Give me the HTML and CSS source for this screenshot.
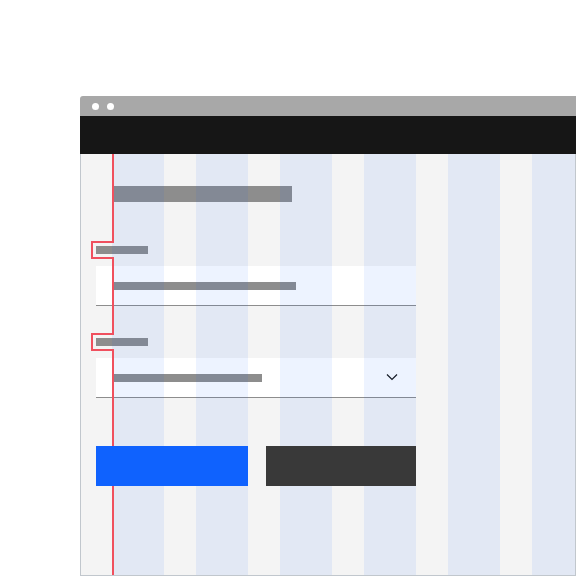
FILE: index.html
```html
<!DOCTYPE html>
<html>
<head>
<meta charset="utf-8">
<link rel="stylesheet" href="styles.css">
</head>
<body>
<div class="window">
  <div class="titlebar"><span class="dot"></span><span class="dot"></span></div>
  <div class="header"></div>
  <div class="content">
    <div class="form">
      <div class="heading"></div>
      <div class="label"></div>
      <div class="field"><div class="bar bar-long"></div></div>
      <div class="label label-second"></div>
      <div class="field field-select">
        <div class="bar bar-short"></div>
        <svg class="chevron" width="16" height="16" viewBox="0 0 16 16"><path d="M3 5.5 L8 10.5 L13 5.5" fill="none" stroke="#161616" stroke-width="1.2"/></svg>
      </div>
      <div class="buttons">
        <div class="btn btn-primary"></div>
        <div class="btn btn-secondary"></div>
      </div>
    </div>
    <div class="columns">
      <div class="col"></div><div class="col"></div><div class="col"></div>
      <div class="col"></div><div class="col"></div><div class="col"></div>
    </div>
    <svg class="redline" width="494" height="421" viewBox="0 0 494 421">
      <path d="M32 0 V88 H11 V104 H32 V180 H11 V196 H32 V430" fill="none" stroke="#f0505e" stroke-width="2"/>
    </svg>
  </div>
</div>
</body>
</html>
```
FILE: styles.css
```css
* { box-sizing: border-box; }
html, body { margin: 0; padding: 0; background: #ffffff; }
body { width: 576px; height: 576px; overflow: hidden; font-family: "Liberation Sans", Arial, sans-serif; }

.window {
  margin-left: 80px;
  margin-top: 96px;
  width: 496px;
  height: 480px;
  display: flex;
  flex-direction: column;
  border-radius: 3px 0 0 0;
  overflow: hidden;
}
.titlebar {
  height: 20px;
  background: #a8a8a8;
  display: flex;
  align-items: center;
  gap: 8px;
  padding-left: 12px;
  flex-shrink: 0;
}
.dot { width: 7px; height: 7px; border-radius: 50%; background: #ffffff; }
.header { height: 38px; background: #161616; flex-shrink: 0; }

.content {
  position: relative;
  height: 422px;
  background: #f4f4f4;
  border: 1px solid #c1c7cd;
  border-top: none;
  overflow: hidden;
}
.form {
  padding: 32px 0 0 15px;
  display: flex;
  flex-direction: column;
}
.heading { margin-left: 16px; width: 180px; height: 16px; background: #8d8d8d; }
.label { margin-top: 44px; width: 52px; height: 8px; background: #8d8d8d; }
.label-second { margin-top: 32px; }
.field {
  margin-top: 12px;
  width: 320px;
  height: 40px;
  background: #ffffff;
  border-bottom: 1px solid #8d8d8d;
  padding: 16px 0 0 16px;
  display: flex;
  align-items: flex-start;
}
.bar { height: 8px; background: #8d8d8d; }
.bar-long { width: 184px; }
.bar-short { width: 150px; }
.field-select { justify-content: space-between; padding-right: 16px; }
.chevron { margin-top: -5px; display: block; }

.buttons {
  margin-top: 48px;
  display: flex;
  gap: 18px;
  position: relative;
  z-index: 4;
}
.btn { height: 40px; }
.btn-primary { width: 152px; background: #0f62fe; }
.btn-secondary { width: 150px; background: #393939; }

.columns {
  position: absolute;
  left: 0; top: 0; bottom: 0; right: 0;
  display: flex;
  gap: 32px;
  padding-left: 31px;
  pointer-events: none;
  z-index: 1;
}
.col { width: 52px; flex-shrink: 0; background: rgba(15, 98, 254, 0.075); }

.redline {
  position: absolute;
  left: 0; top: 0;
  overflow: visible;
  z-index: 3;
  pointer-events: none;
}
```
